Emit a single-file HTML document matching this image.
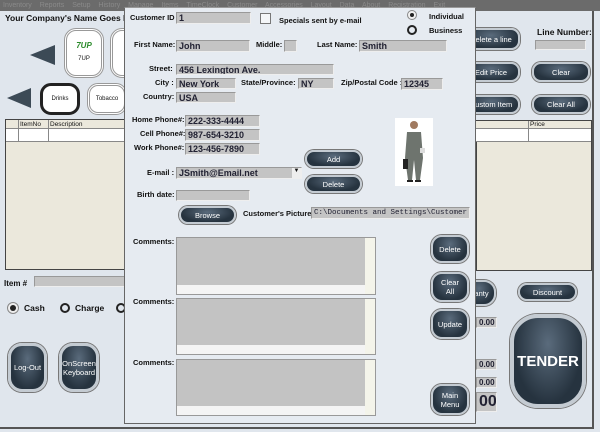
<!DOCTYPE html>
<html><head><meta charset="utf-8"><style>
*{margin:0;padding:0;box-sizing:border-box}
body{width:600px;height:432px;overflow:hidden;background:#e0e6ed;font-family:"Liberation Sans",sans-serif;font-size:8px;color:#111;position:relative}
.a{position:absolute}
.l{position:absolute;font-weight:bold;font-size:7.5px;white-space:nowrap}
.in{position:absolute;background:#c4c4c4;border:1px solid #999;border-right-color:#eee;border-bottom-color:#eee;font-size:9px;font-weight:bold;color:#223;padding-left:2px;line-height:10px;white-space:nowrap;overflow:hidden}
.b{position:absolute;background:radial-gradient(ellipse at 50% 30%,#5a6b7c,#26333f 70%);border:2.5px solid #c4cbd2;box-shadow:0 0 0 1px #777;border-radius:9px;color:#fff;font-size:7.5px;text-align:center;display:flex;align-items:center;justify-content:center;line-height:9px}
.ta{position:absolute;background:#c3c3c3;border:1px solid #999}
.ta .h{position:absolute;left:0;right:10px;bottom:0;height:9px;background:#f4f4f4}
.ta .v{position:absolute;right:0;top:0;bottom:0;width:10px;background:#f4f4ea}
.rad{position:absolute;width:10px;height:10px;border:2px solid #222;border-radius:50%}
</style></head><body>
<div class="a" style="left:0;top:0;width:600px;height:11px;background:#6b6b6b;color:#8a8a8a;font-size:7px;line-height:11px;padding-left:3px;word-spacing:6px">Inventory Reports Setup History Manage Items TimeClock Customer Accessories Layout Data About Registration Exit</div>
<div class="a" style="left:592px;top:11px;width:2px;height:418px;background:#555"></div>
<div class="a" style="left:0;top:427px;width:594px;height:2px;background:#555"></div>
<div class="l" style="left:5px;top:13px;font-size:8.5px">Your Company's Name Goes Here</div>
<div class="a" style="left:64px;top:28px;width:40px;height:50px;border:3px double #999;border-radius:12px;background:#fff;text-align:center;font-size:6px;padding-top:10px"><b style="color:#2a8a2a;font-size:8px;font-style:italic">7UP</b><br><br>7UP</div>
<div class="a" style="left:110px;top:28px;width:30px;height:50px;border:3px double #999;border-radius:12px;background:#fff"></div>
<div class="a" style="left:30px;top:45px;width:0;height:0;border-top:10px solid transparent;border-bottom:10px solid transparent;border-right:25px solid #3c4a56"></div>
<div class="a" style="left:7px;top:88px;width:0;height:0;border-top:10px solid transparent;border-bottom:10px solid transparent;border-right:24px solid #3c4a56"></div>
<div class="a" style="left:40px;top:83px;width:40px;height:32px;border:3px solid #222;border-radius:11px;background:#fff;text-align:center;font-size:6px;line-height:26px">Drinks</div>
<div class="a" style="left:87px;top:83px;width:40px;height:32px;border:3px double #999;border-radius:11px;background:#fff;text-align:center;font-size:6px;line-height:26px">Tobacco</div>
<div class="a" style="left:5px;top:119px;width:120px;height:151px;background:#ebe8dc;border:1px solid #444"></div>
<div class="a" style="left:6px;top:120px;width:119px;height:22px;background:#fff;border-bottom:1px solid #888"></div>
<div class="a" style="left:6px;top:120px;width:119px;height:9px;background:#ebe8dc;border-bottom:1px solid #888;font-size:6.5px;line-height:9px"><span style="position:absolute;left:14px">ItemNo</span><span style="position:absolute;left:44px">Description</span></div>
<div class="a" style="left:18px;top:120px;width:1px;height:22px;background:#888"></div>
<div class="a" style="left:48px;top:120px;width:1px;height:22px;background:#888"></div>
<div class="l" style="left:4px;top:279px;font-size:8px">Item #</div>
<div class="in" style="left:34px;top:276px;width:92px;height:11px"></div>
<div class="a" style="left:7px;top:302px;width:12px;height:12px;border:1px solid #888;border-radius:50%;background:#eee"></div><div class="a" style="left:10px;top:305px;width:6px;height:6px;border-radius:50%;background:#222"></div>
<div class="l" style="left:24px;top:303px;font-size:8.5px">Cash</div>
<div class="rad" style="left:60px;top:303px"></div>
<div class="l" style="left:75px;top:303px;font-size:8.5px">Charge</div>
<div class="rad" style="left:116px;top:303px"></div>
<div class="b" style="left:8px;top:343px;width:39px;height:49px;border-radius:14px;border-width:3px">Log-Out</div>
<div class="b" style="left:59px;top:343px;width:40px;height:49px;border-radius:14px;border-width:3px">OnScreen<br>Keyboard</div>
<div class="b" style="left:462px;top:28px;width:58px;height:22px">Delete a line</div>
<div class="l" style="left:537px;top:27px;font-size:8.5px">Line Number:</div>
<div class="in" style="left:535px;top:40px;width:51px;height:10px"></div>
<div class="b" style="left:462px;top:62px;width:58px;height:20px">Edit Price</div>
<div class="b" style="left:532px;top:62px;width:58px;height:20px">Clear</div>
<div class="b" style="left:462px;top:95px;width:58px;height:19px">Custom Item</div>
<div class="b" style="left:532px;top:95px;width:58px;height:19px">Clear All</div>
<div class="a" style="left:476px;top:120px;width:116px;height:151px;background:#ebe8dc;border:1px solid #444"></div>
<div class="a" style="left:476px;top:121px;width:115px;height:21px;background:#fff;border-bottom:1px solid #888"></div>
<div class="a" style="left:476px;top:121px;width:115px;height:8px;background:#ebe8dc;border-bottom:1px solid #888;font-size:6.5px"><span style="position:absolute;left:54px">Price</span></div>
<div class="a" style="left:528px;top:121px;width:1px;height:21px;background:#888"></div>
<div class="b" style="left:462px;top:280px;width:34px;height:26px;border-radius:12px">rranty</div>
<div class="b" style="left:518px;top:283px;width:59px;height:18px">Discount</div>
<div class="in" style="left:476px;top:317px;width:21px;height:11px;font-size:8px">0.00</div>
<div class="in" style="left:476px;top:359px;width:21px;height:11px;font-size:8px">0.00</div>
<div class="in" style="left:476px;top:377px;width:21px;height:11px;font-size:8px">0.00</div>
<div class="in" style="left:476px;top:392px;width:21px;height:20px;font-size:16px;line-height:18px">00</div>
<div class="b" style="left:510px;top:314px;width:76px;height:94px;border-radius:28px;border-width:4px;font-size:15px;font-weight:bold">TENDER</div>
<div class="a" style="left:124px;top:7px;width:352px;height:417px;background:#e6ebf1;border:1px solid #666;border-top-color:#999"></div>
<div class="l" style="left:130px;top:13px">Customer ID</div>
<div class="in" style="left:176px;top:12px;width:75px;height:12px">1</div>
<div class="a" style="left:260px;top:13px;width:11px;height:11px;border:1px solid #777;background:#f4f6f8"></div>
<div class="l" style="left:279px;top:16px">Specials sent by e-mail</div>
<div class="a" style="left:407px;top:10px;width:10px;height:10px;border:1px solid #888;border-radius:50%;background:#f0f0f0"></div><div class="a" style="left:410px;top:13px;width:4px;height:4px;border-radius:50%;background:#222"></div>
<div class="l" style="left:429px;top:12px">Individual</div>
<div class="rad" style="left:407px;top:25px"></div>
<div class="l" style="left:429px;top:26px">Business</div>
<div class="l" style="left:134px;top:40px">First Name:</div>
<div class="in" style="left:176px;top:40px;width:74px;height:12px">John</div>
<div class="l" style="left:256px;top:40px">Middle:</div>
<div class="in" style="left:284px;top:40px;width:13px;height:12px"></div>
<div class="l" style="left:317px;top:40px">Last Name:</div>
<div class="in" style="left:359px;top:40px;width:88px;height:12px">Smith</div>
<div class="l" style="left:149px;top:64px">Street:</div>
<div class="in" style="left:176px;top:64px;width:158px;height:11px">456 Lexington Ave.</div>
<div class="l" style="left:155px;top:78px">City :</div>
<div class="in" style="left:176px;top:78px;width:60px;height:11px">New York</div>
<div class="l" style="left:241px;top:78px">State/Province:</div>
<div class="in" style="left:298px;top:78px;width:36px;height:11px">NY</div>
<div class="l" style="left:341px;top:78px">Zip/Postal Code :</div>
<div class="in" style="left:401px;top:78px;width:42px;height:12px">12345</div>
<div class="l" style="left:143px;top:92px">Country:</div>
<div class="in" style="left:176px;top:92px;width:60px;height:11px">USA</div>
<div class="l" style="left:132px;top:115px">Home Phone#:</div>
<div class="in" style="left:185px;top:115px;width:75px;height:12px">222-333-4444</div>
<div class="l" style="left:140px;top:129px">Cell Phone#:</div>
<div class="in" style="left:185px;top:129px;width:75px;height:12px">987-654-3210</div>
<div class="l" style="left:134px;top:143px">Work Phone#:</div>
<div class="in" style="left:185px;top:143px;width:75px;height:12px">123-456-7890</div>
<svg class="a" style="left:395px;top:118px" width="38" height="68" viewBox="0 0 38 68"><rect width="38" height="68" fill="#fff"/><circle cx="19" cy="7" r="4" fill="#a07a60"/><path d="M12 14 L26 14 L28 40 L25 62 L21 62 L19 42 L17 62 L13 62 L10 40Z" fill="#6e746e"/><rect x="8" y="41" width="5" height="10" fill="#222"/><rect x="25" y="30" width="5" height="5" fill="#ddd"/><rect x="12" y="62" width="6" height="2" fill="#222"/><rect x="20" y="62" width="6" height="2" fill="#222"/></svg>
<div class="b" style="left:305px;top:150px;width:57px;height:18px">Add</div>
<div class="b" style="left:305px;top:175px;width:57px;height:18px">Delete</div>
<div class="l" style="left:147px;top:168px">E-mail :</div>
<div class="in" style="left:176px;top:167px;width:126px;height:12px">JSmith@Email.net</div>
<div class="a" style="left:292px;top:168px;width:9px;height:10px;background:#eee;font-size:6px;text-align:center">▼</div>
<div class="l" style="left:137px;top:190px">Birth date:</div>
<div class="in" style="left:176px;top:190px;width:74px;height:11px"></div>
<div class="b" style="left:179px;top:206px;width:57px;height:18px">Browse</div>
<div class="l" style="left:243px;top:209px">Customer's Picture:</div>
<div class="in" style="left:311px;top:207px;width:159px;height:12px;font-weight:normal;font-size:7.5px;font-family:'Liberation Mono',monospace">C:\Documents and Settings\Customer PI</div>
<div class="l" style="left:133px;top:237px">Comments:</div>
<div class="ta" style="left:176px;top:237px;width:200px;height:58px"><div class="h"></div><div class="v"></div></div>
<div class="l" style="left:133px;top:297px">Comments:</div>
<div class="ta" style="left:176px;top:298px;width:200px;height:57px"><div class="h"></div><div class="v"></div></div>
<div class="l" style="left:133px;top:358px">Comments:</div>
<div class="ta" style="left:176px;top:359px;width:200px;height:57px"><div class="h"></div><div class="v"></div></div>
<div class="b" style="left:431px;top:235px;width:38px;height:28px;border-radius:11px">Delete</div>
<div class="b" style="left:431px;top:272px;width:38px;height:30px;border-radius:11px">Clear<br>All</div>
<div class="b" style="left:431px;top:309px;width:38px;height:30px;border-radius:11px">Update</div>
<div class="b" style="left:431px;top:384px;width:38px;height:31px;border-radius:11px">Main<br>Menu</div>
</body></html>
